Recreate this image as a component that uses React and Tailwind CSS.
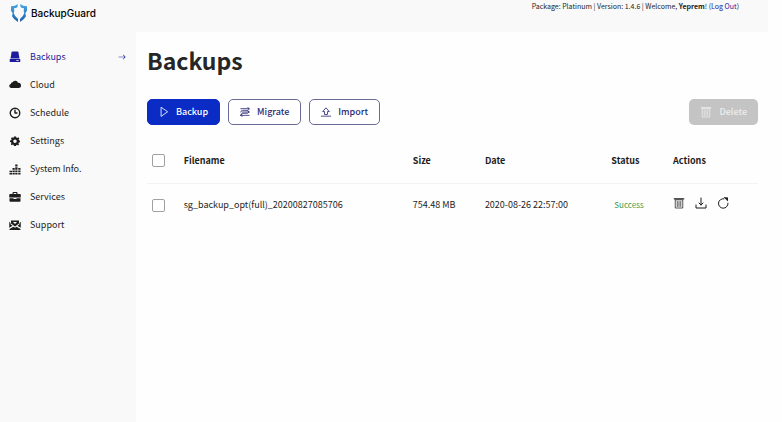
import React, { useState } from "react";
import { BsArrowRight } from "react-icons/bs";

const Svg = ({ children, className = "w-3 h-3", box = "0 0 24 24" }) => (
  <svg viewBox={box} className={className} fill="currentColor" aria-hidden="true">
    {children}
  </svg>
);

const Line = ({ children, className = "w-3 h-3", width = 1.5 }) => (
  <svg
    viewBox="0 0 24 24"
    className={className}
    fill="none"
    stroke="currentColor"
    strokeWidth={width}
    strokeLinecap="round"
    strokeLinejoin="round"
    aria-hidden="true"
  >
    {children}
  </svg>
);

const DriveIcon = () => (
  <Svg>
    <path d="M7 1h10q1.500 0 1.800 1.500L21 15H3L5.200 2.500Q5.500 1 7 1Z" />
    <path d="M1.500 16h21v5q0 1-1 1h-19q-1 0-1-1Zm13 2.500v1.500h5v-1.500Z" fillRule="evenodd" />
  </Svg>
);

const CloudIcon = () => (
  <Svg>
    <path d="M4 18a4 4 0 0 1-.4-7.900A4 4 0 0 1 7 6.500 6 6 0 0 1 18 7.500 5.300 5.300 0 0 1 19.500 18Z" />
  </Svg>
);

const ClockIcon = () => (
  <Line width={2.8}>
    <circle cx="12" cy="12" r="9.500" />
    <path d="M12 6.500V12h4" />
  </Line>
);

const GearIcon = () => (
  <Svg>
    <path
      fillRule="evenodd"
      d="M10 3h4l.6 2 2 .8L18.500 4.500l2 2.200-1.200 2.100.8 1.900 1.900.6v3l-2.300.9-.7 1.800 1 1.800-2 2-2-1.100-1.800.7L14 22h-4l-.6-2-1.900-.8-1.900 1.200-2-2 1.200-2-.7-1.800L2 14v-3l2.400-.7.8-1.900L4 6.500l2-2.200 1.800 1.300 1.700-.8ZM12 9a3.500 3.500 0 1 0 0 7A3.500 3.500 0 0 0 12 9Z"
    />
  </Svg>
);

const StatsIcon = () => (
  <Svg>
    <path d="M1 15.500h5v3H1zM1 20h5v3H1zM7 10h4.500v3.500H7zM7 15h4.500v3.500H7zM7 20h4.500v3H7zM12.500 3H17v4h-4.500zM12.500 8.500H17v5h-4.500zM12.500 15H17v3.500h-4.500zM12.500 20H17v3h-4.500zM18.500 10H23v3.500h-4.500zM18.500 15H23v3.500h-4.500zM18.500 20H23v3h-4.500z" />
  </Svg>
);

const BriefcaseIcon = () => (
  <Svg>
    <path
      fillRule="evenodd"
      d="M7 6V4q0-2 2-2h6q2 0 2 2v2h5q1.500 0 1.500 1.500V13H.5V7.500Q.5 6 2 6Zm2.500 0h5V4.200h-5Z"
    />
    <path d="M1 14.500h8V16h6v-1.500h8V20q0 1.500-1.500 1.500h-19Q1 21.500 1 20Z" />
  </Svg>
);

const MailIcon = () => (
  <Svg>
    <path d="M4 3h16v6l-8 6-8-6ZM.5 5.500L3 8v2.500l4 3-6.500 4ZM23.500 5.500L21 8v2.500l-4 3 6.500 4ZM9 15.500l3 2 3-2 8 4.500v2H1v-2Z" />
    <path d="M8 6l4 4 4-4" fill="#f9f9f9" />
  </Svg>
);

const TrashIcon = ({ className }) => (
  <Line className={className}>
    <path strokeWidth="2.500" d="M2.500 3.500h19" />
    <path d="M4.500 6.500V22h15V6.500zM8.500 9v10M12 9v10M15.500 9v10" />
  </Line>
);

const navItems = [
  { label: "Backups", icon: DriveIcon },
  { label: "Cloud", icon: CloudIcon },
  { label: "Schedule", icon: ClockIcon },
  { label: "Settings", icon: GearIcon },
  { label: "System Info.", icon: StatsIcon },
  { label: "Services", icon: BriefcaseIcon },
  { label: "Support", icon: MailIcon },
];

const backups = [
  {
    name: "sg_backup_opt(full)_20200827085706",
    size: "754.48 MB",
    date: "2020-08-26 22:57:00",
    status: "Success",
  },
];

const Logo = () => (
  <a href="#home" className="flex items-center gap-1 text-black">
    <svg viewBox="0 0 48 54" className="w-4 h-[18px]" fill="none" aria-hidden="true">
      <defs>
        <linearGradient id="shield" x1="0" y1="0" x2="0" y2="1">
          <stop offset="0" stopColor="#48a9e0" />
          <stop offset="1" stopColor="#1d62ad" />
        </linearGradient>
      </defs>
      <path
        fill="url(#shield)"
        d="M20 0v8q-4 5-11 5l1 9-2 4 4 9 9 10v9Q8 47 3 37l2-9-5-8V7q13 0 20-7Z"
      />
      <path
        fill="url(#shield)"
        d="M28 0v8q4 5 11 5l-1 9 2 4-4 9-9 10v9q13-7 18-17l-2-9 5-8V7Q35 7 28 0Z"
      />
    </svg>
    <span className="font-['Inter',sans-serif] text-[10px] leading-4 font-medium">BackupGuard</span>
  </a>
);

const Sidebar = ({ active, setActive }) => (
  <nav className="w-[136px] shrink-0 bg-[#f9f9f9] pt-[11px]">
    {navItems.map(({ label, icon: Icon }) => (
      <a
        key={label}
        href={"#" + label.toLowerCase()}
        onClick={() => setActive(label)}
        className={`flex h-7 items-center pl-[9px] pr-2.5 text-[9px] ${
          active === label ? "text-[#1c1c9c]" : "text-[#1d1d1d]"
        }`}
      >
        <Icon />
        <span className="ml-[9px] flex-1">{label}</span>
        {active === label && <BsArrowRight className="w-2 h-2" />}
      </a>
    ))}
  </nav>
);

const outlineButton =
  "flex h-[26px] items-center gap-[7px] rounded-[5px] border border-[#6a6a9a] bg-white px-[11px] text-[9px] font-medium text-[#2a2a78]";

const App = () => {
  const [active, setActive] = useState("Backups");
  const [selected, setSelected] = useState([]);

  const toggle = (name) => {
    setSelected(
      selected.includes(name) ? selected.filter((item) => item !== name) : [...selected, name]
    );
  };

  const toggleAll = () => {
    setSelected(selected.length === backups.length ? [] : backups.map((item) => item.name));
  };

  const checkbox =
    "block w-[13px] h-[13px] appearance-none rounded-[2px] border border-[#a0a0a0] bg-white checked:bg-[#0a2cc4]";

  return (
    <div className="flex min-h-screen flex-col bg-[#fefefe] font-['Noto_Sans_CJK_SC',sans-serif] leading-4 text-[#1d1d1d]">
      <header className="mr-3.5 flex h-8 items-start justify-between bg-[#f9f9f9] pl-[11px] pr-[29px]">
        <div className="pt-1">
          <Logo />
        </div>
        <p className="text-[7px] leading-3">
          Package: Platinum | Version: 1.4.6 | Welcome, <b>Yeprem</b>! (
          <a href="#logout" className="text-[#1c1c9c]">
            Log Out
          </a>
          )
        </p>
      </header>

      <div className="flex flex-1">
        <Sidebar active={active} setActive={setActive} />

        <main className="min-w-0 flex-1 pl-[11px] pr-6 pt-2.5">
          <h1 className="text-[23px] leading-9 font-bold text-[#262626]">Backups</h1>

          <div className="mt-[21px] flex items-center gap-2">
            <button className="flex h-[26px] items-center gap-[7px] rounded-[5px] border border-[#0a2cc4] bg-[#0a2cc4] px-[11px] text-[9px] font-medium text-white">
              <Line className="w-2.5 h-2.5" width={2}>
                <path d="M5 1.500v21L20 12Z" />
              </Line>
              Backup
            </button>
            <button className={outlineButton}>
              <Line className="w-2.5 h-2.5" width={2}>
                <path d="M2 4h20l-3-3M22 4q0 4-4 4H6q-4 0-4 4M6 12h16M18 9l4 3-4 3H6q-4 0-4 5M2 20h20M5 17l-3 3 3 3" />
              </Line>
              Migrate
            </button>
            <button className={outlineButton}>
              <Line className="w-2.5 h-2.5" width={2}>
                <path d="M8.500 17v-6H4L12 2l8 9h-4.500v6ZM1 22h22" />
              </Line>
              Import
            </button>
            <button
              disabled={selected.length === 0}
              className="ml-auto flex h-[26px] items-center gap-[7px] rounded-[5px] bg-[#c4c4c4] px-[11px] text-[9px] font-medium text-[#ededed]"
            >
              <TrashIcon className="w-3 h-3" />
              Delete
            </button>
          </div>

          <table className="mt-3.5 w-full table-fixed text-left text-[9px]">
            <colgroup>
              <col className="w-[6%]" />
              <col className="w-[37.500%]" />
              <col className="w-[11.800%]" />
              <col className="w-[20.700%]" />
              <col className="w-[10.100%]" />
              <col />
            </colgroup>
            <thead>
              <tr className="h-11 border-b border-[#f3f3f3]">
                <th className="pl-[5px]">
                  <input
                    type="checkbox"
                    aria-label="Select all backups"
                    className={checkbox}
                    checked={selected.length === backups.length}
                    onChange={toggleAll}
                  />
                </th>
                <th>Filename</th>
                <th>Size</th>
                <th>Date</th>
                <th>Status</th>
                <th>Actions</th>
              </tr>
            </thead>
            <tbody>
              {backups.map((item) => (
                <tr key={item.name} className="h-11">
                  <td className="pl-[5px]">
                    <input
                      type="checkbox"
                      aria-label={"Select " + item.name}
                      className={checkbox}
                      checked={selected.includes(item.name)}
                      onChange={() => toggle(item.name)}
                    />
                  </td>
                  <td>{item.name}</td>
                  <td>{item.size}</td>
                  <td>{item.date}</td>
                  <td className="pl-[3px] text-[8px] text-[#3f9b49]">{item.status}</td>
                  <td>
                    <div className="flex items-center gap-2.5 pb-1">
                      <button aria-label="Delete">
                        <TrashIcon className="w-3 h-3" />
                      </button>
                      <button aria-label="Download">
                        <Line width={2}>
                          <path d="M12 2v14M8 12l4 4 4-4M2 16v6h20v-6" />
                        </Line>
                      </button>
                      <button aria-label="Restore">
                        <Line width={2}>
                          <path d="M14 3.500a9.500 9.500 0 1 0 8 9" />
                          <path d="M13 0l9 1v8Z" fill="currentColor" strokeWidth="0" />
                        </Line>
                      </button>
                    </div>
                  </td>
                </tr>
              ))}
            </tbody>
          </table>
        </main>
      </div>
    </div>
  );
};

export default App;
